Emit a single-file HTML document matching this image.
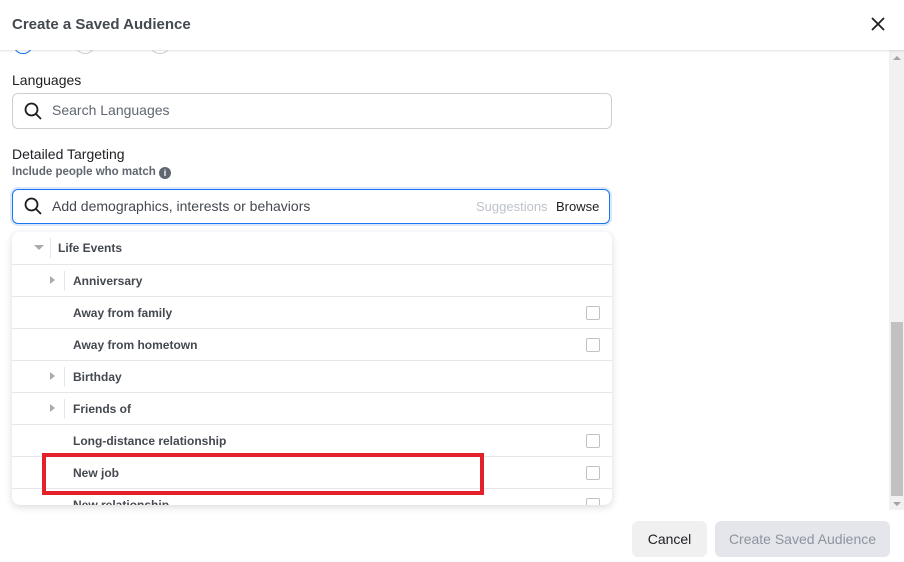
<!DOCTYPE html>
<html><head><style>
body{margin:0;width:904px;height:562px;background:#fff;font-family:"Liberation Sans",Arial,sans-serif;position:relative;overflow:hidden;color:#1c1e21}
.a{position:absolute}
.hdr{left:0;top:0;width:904px;height:50px;background:#fff;box-shadow:0 1px 2px rgba(0,0,0,.12);z-index:5}
.row{position:absolute;left:0;width:600px;height:32px;border-top:1px solid #e4e6eb;font-size:12px;font-weight:bold;color:#444950;line-height:33px}
.cb{position:absolute;left:574px;top:9px;width:12px;height:12px;border:1px solid #bec3c9;border-radius:2px;background:#fff}
.tri{position:absolute;left:38px;top:11px;width:0;height:0;border-left:5px solid #a8abaf;border-top:4px solid transparent;border-bottom:4px solid transparent}
.sep{position:absolute;left:52px;top:6px;width:1px;height:20px;background:#e4e6eb}
</style></head><body>
<div class="a hdr">
 <div class="a" style="left:12px;top:16px;font-size:15px;font-weight:bold;color:#444950">Create a Saved Audience</div>
 <svg class="a" style="left:871px;top:17px" width="14" height="14"><path d="M1 1L13 13M13 1L1 13" stroke="#1c1e21" stroke-width="1.8"/></svg>
</div>
<div class="a" style="left:13px;top:34px;width:18px;height:18px;border:1.5px solid #1877f2;border-radius:50%"></div>
<div class="a" style="left:75px;top:34px;width:18px;height:18px;border:1px solid #ccd0d5;border-radius:50%"></div>
<div class="a" style="left:150px;top:34px;width:18px;height:18px;border:1px solid #ccd0d5;border-radius:50%"></div>
<div class="a" style="left:12px;top:72px;font-size:14px;color:#1c1e21">Languages</div>
<div class="a" style="left:12px;top:93px;width:598px;height:34px;border:1px solid #ccd0d5;border-radius:6px"></div>
<svg class="a" style="left:24px;top:102px" width="18" height="18"><circle cx="7.5" cy="7.5" r="6" fill="none" stroke="#1c1e21" stroke-width="1.8"/><path d="M12 12L17 17" stroke="#1c1e21" stroke-width="1.8"/></svg>
<div class="a" style="left:52px;top:102px;font-size:14px;color:#606770">Search Languages</div>
<div class="a" style="left:12px;top:146px;font-size:14px">Detailed Targeting</div>
<div class="a" style="left:12px;top:166px;font-size:11.5px;font-weight:bold;color:#606770;white-space:nowrap">Include people who match <span style="display:inline-block;width:12px;height:12px;border-radius:50%;background:#606770;color:#fff;font-size:9px;text-align:center;line-height:12px;vertical-align:-1px">i</span></div>
<div class="a" style="left:12px;top:189px;width:596px;height:33px;border:1.5px solid #1877f2;border-radius:6px;box-shadow:0 0 0 2px #dbe7fb"></div>
<svg class="a" style="left:24px;top:197px" width="18" height="18"><circle cx="7.5" cy="7.5" r="6" fill="none" stroke="#1c1e21" stroke-width="1.8"/><path d="M12 12L17 17" stroke="#1c1e21" stroke-width="1.8"/></svg>
<div class="a" style="left:52px;top:198px;font-size:14px;color:#444950">Add demographics, interests or behaviors</div>
<div class="a" style="left:476px;top:199px;font-size:13px;color:#bec3c9">Suggestions</div>
<div class="a" style="left:556px;top:199px;font-size:13px;color:#1c1e21">Browse</div>
<div class="a" style="left:12px;top:232px;width:600px;height:273px;background:#fff;border-radius:8px;box-shadow:0 2px 8px rgba(0,0,0,.15);overflow:hidden">
 <div class="row" style="top:0;border-top:none;padding-left:46px;width:554px"><div style="position:absolute;left:22px;top:13px;border-top:5px solid #a8abaf;border-left:5px solid transparent;border-right:5px solid transparent"></div><div class="sep" style="left:38px"></div>Life Events</div>
 <div class="row" style="top:32px;padding-left:61px;width:539px"><div class="tri"></div><div class="sep"></div>Anniversary</div>
 <div class="row" style="top:64px;padding-left:61px;width:539px">Away from family<div class="cb"></div></div>
 <div class="row" style="top:96px;padding-left:61px;width:539px">Away from hometown<div class="cb"></div></div>
 <div class="row" style="top:128px;padding-left:61px;width:539px"><div class="tri"></div><div class="sep"></div>Birthday</div>
 <div class="row" style="top:160px;padding-left:61px;width:539px"><div class="tri"></div><div class="sep"></div>Friends of</div>
 <div class="row" style="top:192px;padding-left:61px;width:539px">Long-distance relationship<div class="cb"></div></div>
 <div class="row" style="top:224px;padding-left:61px;width:539px">New job<div class="cb"></div></div>
 <div class="row" style="top:256px;padding-left:61px;width:539px">New relationship<div class="cb"></div></div>
</div>
<div class="a" style="left:42px;top:453px;width:434px;height:34px;border:4px solid #e3212b"></div>
<div class="a" style="left:889px;top:50px;width:15px;height:460px;background:#f1f1f1"></div>
<div class="a" style="left:891px;top:322px;width:12px;height:174px;background:#c1c1c1"></div>
<div class="a" style="left:893px;top:56px;border-bottom:4px solid #a3a3a3;border-left:4px solid transparent;border-right:4px solid transparent"></div>
<div class="a" style="left:893px;top:502px;border-top:4px solid #a3a3a3;border-left:4px solid transparent;border-right:4px solid transparent"></div>
<div class="a" style="left:632px;top:521px;width:75px;height:36px;background:#f0f0f0;border-radius:6px;font-size:14px;line-height:36px;text-align:center;color:#1c1e21">Cancel</div>
<div class="a" style="left:715px;top:521px;width:175px;height:36px;background:#e4e6eb;border-radius:6px;font-size:14px;line-height:36px;text-align:center;color:#8d949e">Create Saved Audience</div>
</body></html>
